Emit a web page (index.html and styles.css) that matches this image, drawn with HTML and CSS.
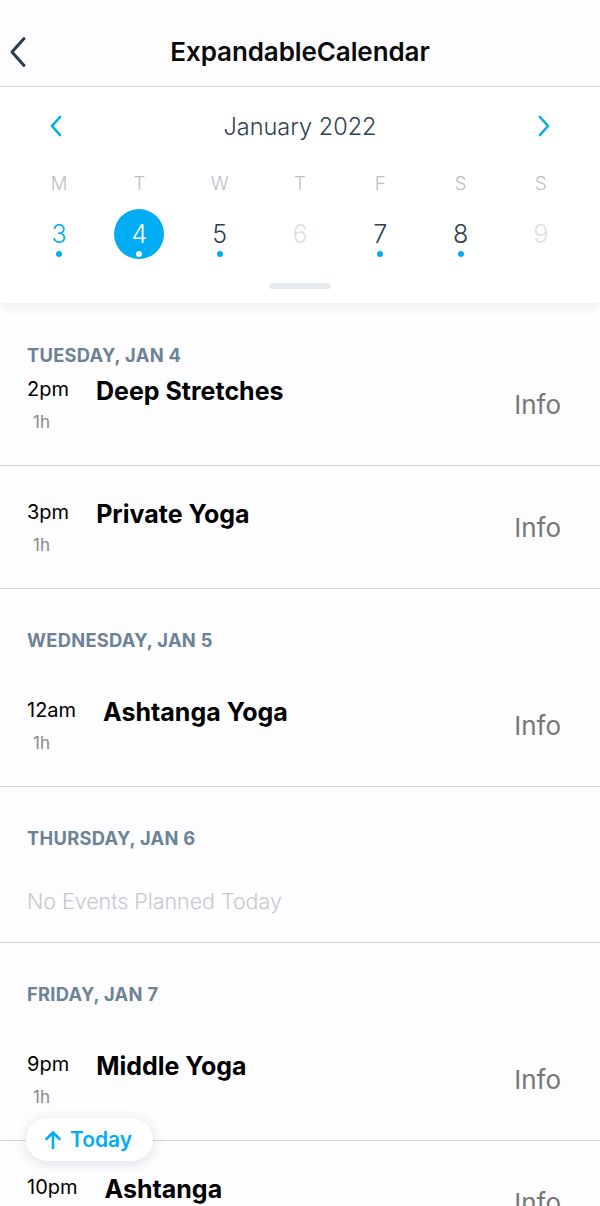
FILE: index.html
```html
<!DOCTYPE html>
<html>
<head>
<meta charset="utf-8">
<link rel="stylesheet" href="styles.css">
</head>
<body>
<div class="screen">
  <header class="navbar">
    <svg class="nav-back" width="20" height="32" viewBox="0 0 20 32"><path d="M16 2.5 L4 16 L16 29.5" fill="none" stroke="#2b3a49" stroke-width="3" stroke-linecap="round" stroke-linejoin="round"/></svg>
    <h1 class="nav-title">ExpandableCalendar</h1>
  </header>

  <section class="calendar">
    <div class="cal-header">
      <svg class="cal-arrow" width="16" height="22" viewBox="0 0 16 22"><path d="M12 2 L4 11 L12 20" fill="none" stroke="#00aceb" stroke-width="2.6" stroke-linecap="round" stroke-linejoin="round"/></svg>
      <div class="cal-month">January 2022</div>
      <svg class="cal-arrow" width="16" height="22" viewBox="0 0 16 22"><path d="M4 2 L12 11 L4 20" fill="none" stroke="#00aceb" stroke-width="2.6" stroke-linecap="round" stroke-linejoin="round"/></svg>
    </div>
    <div class="cal-grid">
      <div class="dname">M</div><div class="dname">T</div><div class="dname">W</div><div class="dname">T</div><div class="dname">F</div><div class="dname">S</div><div class="dname">S</div>
      <div class="day today"><span class="num">3</span><span class="dot"></span></div>
      <div class="day"><span class="sel"><span class="num">4</span><span class="dot dot--white"></span></span></div>
      <div class="day"><span class="num">5</span><span class="dot"></span></div>
      <div class="day disabled"><span class="num">6</span></div>
      <div class="day"><span class="num">7</span><span class="dot"></span></div>
      <div class="day"><span class="num">8</span><span class="dot"></span></div>
      <div class="day disabled"><span class="num">9</span></div>
    </div>
    <div class="knob"></div>
  </section>

  <main class="list">
    <div class="sec-header sec-header--sticky">TUESDAY, JAN 4</div>
    <div class="item item--first">
      <div class="item-left">
        <div class="item-row"><span class="item-time">2pm</span><span class="item-title">Deep Stretches</span></div>
        <div class="item-dur">1h</div>
      </div>
      <span class="item-info">Info</span>
    </div>
    <div class="item">
      <div class="item-left">
        <div class="item-row"><span class="item-time">3pm</span><span class="item-title">Private Yoga</span></div>
        <div class="item-dur">1h</div>
      </div>
      <span class="item-info">Info</span>
    </div>

    <div class="sec-header">WEDNESDAY, JAN 5</div>
    <div class="item">
      <div class="item-left">
        <div class="item-row"><span class="item-time">12am</span><span class="item-title">Ashtanga Yoga</span></div>
        <div class="item-dur">1h</div>
      </div>
      <span class="item-info">Info</span>
    </div>

    <div class="sec-header">THURSDAY, JAN 6</div>
    <div class="empty">No Events Planned Today</div>

    <div class="sec-header">FRIDAY, JAN 7</div>
    <div class="item">
      <div class="item-left">
        <div class="item-row"><span class="item-time">9pm</span><span class="item-title">Middle Yoga</span></div>
        <div class="item-dur">1h</div>
      </div>
      <span class="item-info">Info</span>
    </div>
    <div class="item">
      <div class="item-left">
        <div class="item-row"><span class="item-time">10pm</span><span class="item-title">Ashtanga</span></div>
        <div class="item-dur">1h</div>
      </div>
      <span class="item-info">Info</span>
    </div>
  </main>

  <button class="today-btn">
    <svg width="18" height="20" viewBox="0 0 18 20"><path d="M9 18 V3 M2.5 9 L9 2.5 L15.5 9" fill="none" stroke="#00adf5" stroke-width="2.6" stroke-linecap="round" stroke-linejoin="round"/></svg>
    <span>Today</span>
  </button>
</div>
</body>
</html>
```

FILE: styles.css
```css
* { box-sizing: border-box; }
html, body { margin: 0; padding: 0; }
body {
  width: 600px;
  height: 1206px;
  overflow: hidden;
  background: #fdfcfe;
  font-family: Inter, "Liberation Sans", sans-serif;
  color: #000;
}
.screen {
  position: relative;
  width: 600px;
  height: 1206px;
  overflow: hidden;
}

/* nav bar */
.navbar {
  height: 87px;
  display: flex;
  align-items: center;
  justify-content: center;
  position: relative;
  padding-top: 17px;
  border-bottom: 1px solid #d8d8dc;
  background: #fdfcfe;
}
.nav-back {
  position: absolute;
  left: 8px;
  top: 36px;
}
.nav-title {
  margin: 0;
  font-size: 26px;
  font-weight: 600;
  letter-spacing: -0.1px;
  color: #0a0a0a;
}

/* calendar */
.calendar {
  background: #fff;
  box-shadow: 0 6px 10px rgba(0,0,0,0.05);
  position: relative;
  z-index: 2;
  padding-top: 10px;
  height: 216px;
}
.cal-header {
  display: flex;
  align-items: center;
  justify-content: space-between;
  padding: 0 48px 0 48px;
  height: 58px;
}
.cal-month {
  font-size: 23.5px;
  font-weight: 300;
  color: #2d4150;
}
.cal-grid {
  display: grid;
  grid-template-columns: repeat(7, 1fr);
  padding: 0 19px;
}
.dname {
  text-align: center;
  font-size: 18.5px;
  font-weight: 300;
  color: #b6c1cd;
  height: 32px;
  line-height: 32px;
  margin-top: 12px;
}
.day {
  height: 68px;
  display: flex;
  flex-direction: column;
  align-items: center;
  padding-top: 20px;
  position: relative;
}
.num {
  font-size: 25px;
  font-weight: 300;
  line-height: 30px;
  color: #2d4150;
}
.day.today .num { color: #00adf5; }
.day.disabled .num { color: #d9e1e8; }
.dot {
  width: 6px;
  height: 6px;
  border-radius: 50%;
  background: #00adf5;
  margin-top: 2px;
}
.dot--white { background: #fff; }
.sel {
  width: 50px;
  height: 50px;
  border-radius: 50%;
  background: #00adf5;
  display: flex;
  flex-direction: column;
  align-items: center;
  padding-top: 10px;
  margin-top: -10px;
}
.sel .num { color: #fff; }
.knob {
  width: 62px;
  height: 6px;
  border-radius: 3px;
  background: #e7ebef;
  margin: 16px auto 0;
}

/* list */
.list {
  background: #fdfcfe;
}
.sec-header {
  height: 75px;
  padding: 41px 0 0 27px;
  font-size: 18.3px;
  line-height: 20px;
  font-weight: 700;
  color: #6c8396;
  letter-spacing: 0.3px;
  background: #fdfcfe;
  position: relative;
  z-index: 1;
}
.sec-header--sticky {
  height: 69px;
  padding-top: 42px;
}
.item {
  height: 123px;
  border-bottom: 1px solid #d2d2d6;
  display: flex;
  align-items: center;
  justify-content: space-between;
  padding: 0 39px 0 27px;
  background: #fdfcfe;
}
.item--first {
  margin-top: -29px;
  background: transparent;
}
.item-row {
  display: flex;
  align-items: flex-start;
}
.item-time {
  font-size: 20px;
  line-height: 22px;
  color: #000;
}
.item-title {
  margin-left: 27px;
  font-size: 25px;
  line-height: 26px;
  font-weight: 700;
  color: #000;
}
.item-dur {
  margin-top: 9px;
  margin-left: 6px;
  font-size: 17px;
  line-height: 18px;
  color: #888;
}
.item-info {
  font-size: 26px;
  color: #777;
  line-height: 30px;
  margin-top: 2px;
}
.empty {
  height: 81px;
  padding: 27px 0 0 27px;
  font-size: 21.4px;
  line-height: 24px;
  color: #c8c8cd;
  border-bottom: 1px solid #d2d2d6;
  font-weight: 300;
}

/* floating today button */
.today-btn {
  position: absolute;
  left: 26px;
  top: 1118px;
  width: 127px;
  height: 43px;
  border: none;
  border-radius: 22px;
  background: #fff;
  box-shadow: 0 2px 14px rgba(0,0,0,0.12);
  display: flex;
  align-items: center;
  gap: 8px;
  padding: 0 0 0 18px;
  font-family: Inter, "Liberation Sans", sans-serif;
  font-size: 21px;
  font-weight: 600;
  color: #00adf5;
  z-index: 5;
}
```
